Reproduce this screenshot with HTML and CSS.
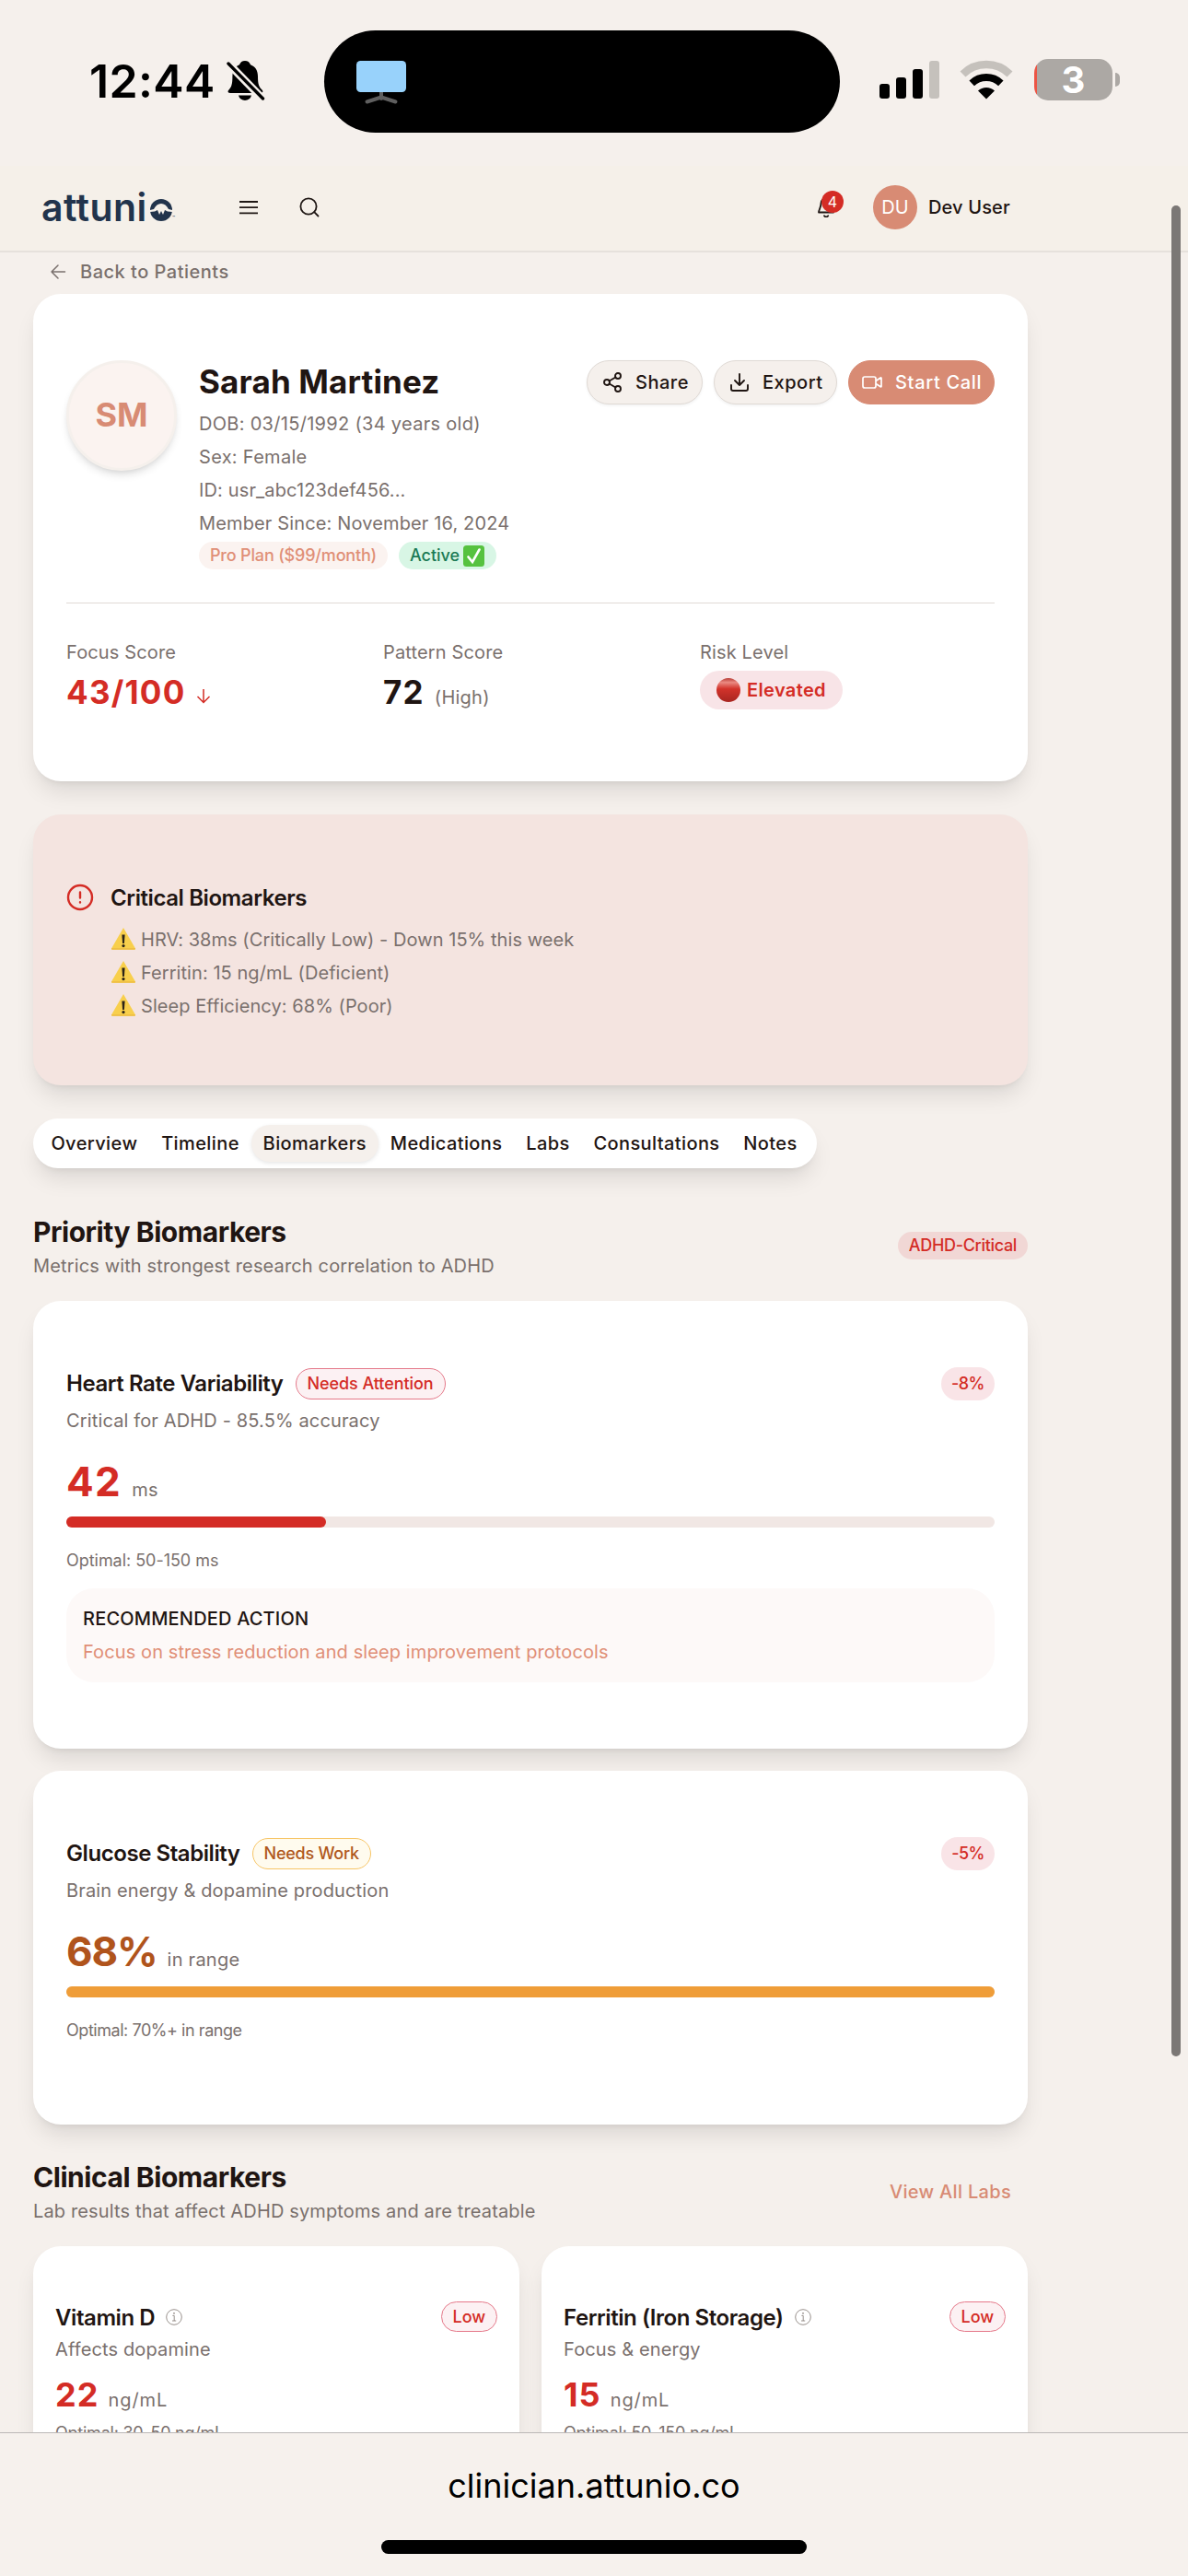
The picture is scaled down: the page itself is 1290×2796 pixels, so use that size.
FILE: index.html
```html
<!DOCTYPE html>
<html lang="en">
<head>
  <meta charset="UTF-8">
  <title>Attunio Clinician - Sarah Martinez</title>
  <meta name="viewport" content="width=device-width, initial-scale=1.0">
  <link rel="stylesheet" href="styles.css">
</head>
<body>
  <!-- shared icons -->
  <svg class="defs" width="0" height="0">
    <symbol id="warn" viewBox="0 0 28 25">
      <path d="M14 1 27 23.5a1 1 0 0 1-.8 1.2H1.8A1 1 0 0 1 1 23.5Z" fill="#f8cf4c"/>
      <path d="M1 23h26v.7a1 1 0 0 1-1 1H2a1 1 0 0 1-1-1Z" fill="#efbf45"/>
      <path d="M12.4 8.5h3.2l-.7 9.5h-1.8Z" fill="#2b2418"/>
      <circle cx="14" cy="20.6" r="1.6" fill="#2b2418"/>
    </symbol>
    <symbol id="info" viewBox="0 0 18 18">
      <circle cx="9" cy="9" r="8.3" fill="none" stroke="#8d8480" stroke-width="0.9"/>
      <path d="M7.4 7.4h1.8V13M7 13h4.2" fill="none" stroke="#8d8480" stroke-width="0.9"/>
      <circle cx="9" cy="4.8" r="0.9" fill="#8d8480"/>
    </symbol>
  </svg>

  <div class="status-bar">
    <div class="status-left">
      <span class="time">12:44</span>
      <svg width="42" height="46" viewBox="0 0 42 46">
        <path d="M20 1c3 0 5 1.600 6 4.200 5.500 2.200 8 6.500 8 12.800 0 8 1 11 4.500 14.500 1.600 1.800.8 3.500-1.500 3.500H4c-2.500 0-3.300-1.800-1.500-3.600C5.500 29.400 6.400 26 6.400 18c0-6.300 2.100-10.600 7.600-12.800C15 2.600 17 1 20 1Z"/>
        <path d="M13 38.600h14c-1 3.700-3.500 5.400-7 5.400s-6-1.700-7-5.400Z"/>
        <path d="M2 4 40 43" stroke="#f5f0eb" stroke-width="8.500"/>
        <path d="M2 4 39.500 42" stroke="#000" stroke-width="3.400" stroke-linecap="round"/>
      </svg>
    </div>
    <div class="island">
      <svg width="56" height="48" viewBox="0 0 56 48">
        <path d="M28 33v8M12.500 44.500 28 39.500 43.500 44.500" fill="none" stroke="#5f5f5f" stroke-width="4" stroke-linecap="round" stroke-linejoin="round"/>
        <rect x="1" y="0" width="54" height="34" rx="4.500" fill="#98d2fb"/>
      </svg>
    </div>
    <div class="status-right">
      <svg width="65" height="42" viewBox="0 0 65 42">
        <rect x="0" y="25" width="11" height="16" rx="3"/>
        <rect x="18" y="18" width="11" height="23" rx="3"/>
        <rect x="36" y="9" width="11" height="32" rx="3"/>
        <rect x="54" y="0" width="11" height="41" rx="3" fill="#c5c1bc"/>
      </svg>
      <svg class="wifi" width="58" height="43" viewBox="0 0 58 43">
        <path d="M3.500 15.500a36.500 36.500 0 0 1 51 0" fill="none" stroke="#c5c1bc" stroke-width="8.500"/>
        <path d="M13.200 25.400a23 23 0 0 1 31.600 0" fill="none" stroke="#000" stroke-width="8"/>
        <path d="M29 42.500 20 33.500a13 13 0 0 1 18 0Z"/>
      </svg>
      <div class="battery"><span>3</span></div>
      <div class="battery-nub"></div>
    </div>
  </div>

  <header>
    <div class="logo">
      <span>attuni</span>
      <svg width="24" height="24" viewBox="0 0 24 24">
        <circle cx="12" cy="12" r="12" fill="#22344c"/>
        <path d="M0 12 4 11Q7 5 12 5T20 11L24 12V14L19 13.500 16 12 14 17 12 13 10 17 8 12 5 13.500 0 14Z" fill="#f5f0e9"/>
      </svg>
      <small>™</small>
    </div>
    <svg class="menu-icon" width="20" height="16" viewBox="0 0 20 16" fill="none" stroke="#1f1714" stroke-width="1.800">
      <path d="M0 2h20M0 8.200h20M0 14.400h20"/>
    </svg>
    <svg class="search-icon" width="22" height="22" viewBox="0 0 22 22" fill="none" stroke="#1f1714" stroke-width="1.800" stroke-linecap="round">
      <circle cx="10" cy="10" r="8.600"/>
      <path d="m16.200 16.200 4.300 4.300"/>
    </svg>
    <div class="bell">
      <svg width="18" height="22" viewBox="0 0 18 22" fill="none" stroke="#1f1714" stroke-width="1.800" stroke-linecap="round" stroke-linejoin="round">
        <path d="M7 20.200a2.500 2.500 0 0 0 4.200 0"/>
        <path d="M9 1a5.500 5.500 0 0 0-5.500 5.500c0 5-2.500 7.500-2.500 10h16c0-2.500-2.500-5-2.500-10A5.500 5.500 0 0 0 9 1Z"/>
      </svg>
      <span class="count">4</span>
    </div>
    <div class="user-avatar">DU</div>
    <span class="user-name">Dev User</span>
  </header>

  <main>
    <div class="back">
      <svg width="24" height="24" viewBox="0 0 24 24" fill="none" stroke="#7a706d" stroke-width="1.500" stroke-linecap="round" stroke-linejoin="round">
        <path d="m12 19-7-7 7-7M19.500 12H5"/>
      </svg>
      <span>Back to Patients</span>
    </div>

    <section class="card patient">
      <div class="profile">
        <div class="avatar">SM</div>
        <div class="details">
          <h1>Sarah Martinez</h1>
          <p class="dob">DOB: 03/15/1992 (34 years old)</p>
          <p class="dob">Sex: Female</p>
          <p>ID: usr_abc123def456...</p>
          <p>Member Since: November 16, 2024</p>
          <div class="pills">
            <span class="pill plan">Pro Plan ($99/month)</span>
            <span class="pill active">Active
              <svg width="23" height="23" viewBox="0 0 23 23">
                <rect width="23" height="23" rx="3.500" fill="#56c23f"/>
                <path d="m5.500 12.500 4.500 5.500L17.500 4.500" fill="none" stroke="#fff" stroke-width="2.600" stroke-linecap="round"/>
              </svg>
            </span>
          </div>
        </div>
        <div class="actions">
          <button class="btn">
            <svg width="24" height="24" viewBox="0 0 24 24" fill="none" stroke="currentColor" stroke-width="1.900" stroke-linecap="round">
              <circle cx="18" cy="5" r="3"/><circle cx="6" cy="12" r="3"/><circle cx="18" cy="19" r="3"/>
              <path d="m8.600 13.500 6.800 4M15.400 6.500l-6.800 4"/>
            </svg>
            Share
          </button>
          <button class="btn export">
            <svg width="24" height="24" viewBox="0 0 24 24" fill="none" stroke="currentColor" stroke-width="1.900" stroke-linecap="round" stroke-linejoin="round">
              <path d="M21 15v4a2 2 0 0 1-2 2H5a2 2 0 0 1-2-2v-4M7 10l5 5 5-5M12 15V3"/>
            </svg>
            Export
          </button>
          <button class="btn primary">
            <svg width="24" height="24" viewBox="0 0 24 24" fill="none" stroke="currentColor" stroke-width="1.700" stroke-linejoin="round">
              <path d="m16 10.500 5.200-3.500a.5.500 0 0 1 .8.400v9a.5.500 0 0 1-.8.400L16 13.500"/>
              <rect x="2" y="6" width="14" height="12" rx="2"/>
            </svg>
            Start Call
          </button>
        </div>
      </div>
      <div class="scores">
        <div>
          <p>Focus Score</p>
          <div class="score-value red">43/100
            <svg width="16" height="17" viewBox="0 0 16 17" fill="none" stroke="currentColor" stroke-width="1.500">
              <path d="M8 1v14M1.500 9 8 15.500 14.500 9"/>
            </svg>
          </div>
        </div>
        <div>
          <p>Pattern Score</p>
          <div class="score-value">72 <small>(High)</small></div>
        </div>
        <div>
          <p>Risk Level</p>
          <span class="risk"><i class="risk-dot"></i>Elevated</span>
        </div>
      </div>
    </section>

    <section class="card critical">
      <svg width="30" height="30" viewBox="0 0 30 30" fill="none" stroke="#d42c25" stroke-width="2.400" stroke-linecap="round">
        <circle cx="15" cy="15" r="13"/>
        <path d="M15 9.500v6M15 20.300v.2"/>
      </svg>
      <div>
        <h2>Critical Biomarkers</h2>
        <p><svg width="28" height="25"><use href="#warn"/></svg>HRV: 38ms (Critically Low) - Down 15% this week</p>
        <p><svg width="28" height="25"><use href="#warn"/></svg>Ferritin: 15 ng/mL (Deficient)</p>
        <p><svg width="28" height="25"><use href="#warn"/></svg>Sleep Efficiency: 68% (Poor)</p>
      </div>
    </section>

    <nav class="tabs">
      <a>Overview</a>
      <a>Timeline</a>
      <a class="selected">Biomarkers</a>
      <a>Medications</a>
      <a>Labs</a>
      <a>Consultations</a>
      <a>Notes</a>
    </nav>

    <div class="section-head">
      <div>
        <h2>Priority Biomarkers</h2>
        <p>Metrics with strongest research correlation to ADHD</p>
      </div>
      <span class="pill adhd">ADHD-Critical</span>
    </div>

    <section class="card marker">
      <div class="marker-head">
        <h3>Heart Rate Variability</h3>
        <span class="badge bad">Needs Attention</span>
        <span class="change">-8%</span>
      </div>
      <p>Critical for ADHD - 85.5% accuracy</p>
      <div class="value red hrv">42 <small>ms</small></div>
      <div class="track"><div class="fill" style="width:28%"></div></div>
      <p class="optimal">Optimal: 50-150 ms</p>
      <div class="action">
        <strong>RECOMMENDED ACTION</strong>
        <p>Focus on stress reduction and sleep improvement protocols</p>
      </div>
    </section>

    <section class="card marker">
      <div class="marker-head">
        <h3>Glucose Stability</h3>
        <span class="badge warn">Needs Work</span>
        <span class="change">-5%</span>
      </div>
      <p>Brain energy &amp; dopamine production</p>
      <div class="value amber">68% <small>in range</small></div>
      <div class="track"><div class="fill orange" style="width:100%"></div></div>
      <p class="optimal glucose">Optimal: 70%+ in range</p>
    </section>

    <div class="section-head clinical">
      <div>
        <h2>Clinical Biomarkers</h2>
        <p>Lab results that affect ADHD symptoms and are treatable</p>
      </div>
      <a class="view-all">View All Labs</a>
    </div>

    <div class="labs">
      <section class="card lab">
        <div class="lab-head">
          <h3>Vitamin D</h3>
          <svg width="18" height="18"><use href="#info"/></svg>
          <span class="badge bad">Low</span>
        </div>
        <p>Affects dopamine</p>
        <div class="lab-value">22 <small>ng/mL</small></div>
        <p class="lab-optimal">Optimal: 30-50 ng/mL</p>
      </section>
      <section class="card lab">
        <div class="lab-head">
          <h3>Ferritin (Iron Storage)</h3>
          <svg width="18" height="18"><use href="#info"/></svg>
          <span class="badge bad">Low</span>
        </div>
        <p>Focus &amp; energy</p>
        <div class="lab-value">15 <small>ng/mL</small></div>
        <p class="lab-optimal">Optimal: 50-150 ng/mL</p>
      </section>
    </div>
  </main>

  <footer>
    <span>clinician.attunio.co</span>
    <div class="home-indicator"></div>
  </footer>

  <div class="scroll-thumb"></div>
</body>
</html>
```
FILE: styles.css
```css
* {
  box-sizing: border-box;
}
body {
  margin: 0;
  position: relative;
  width: 1290px;
  height: 2796px;
  overflow: hidden;
  display: flex;
  flex-direction: column;
  background: #f5f0ec;
  color: #1f1512;
  font-family: Inter, sans-serif;
  font-size: 20px;
  line-height: 36px;
}
h1, h2, h3, p { margin: 0; }
svg { flex: none; display: block; }
.defs { position: absolute; }
.red { color: #d42c25; }

/* phone status bar */
.status-bar {
  height: 180px;
  flex: none;
  padding-top: 33px;
  display: grid;
  grid-template-columns: 352px 560px 1fr;
  grid-template-rows: 111px;
  color: #000;
}
.status-left {
  display: flex;
  align-items: center;
  padding: 0 0 2px 97px;
  gap: 12px;
}
.time {
  font-size: 50px;
  font-weight: 600;
  letter-spacing: 0.007em;
}
.island {
  background: #000;
  border-radius: 56px;
  padding: 33px 34px;
}
.status-right {
  display: flex;
  align-items: center;
  padding: 0 0 4px 43px;
}
.wifi { margin-left: 22px; }
.battery {
  margin-left: 23px;
  width: 85px;
  height: 45px;
  border-radius: 15px;
  background: linear-gradient(90deg, #ec5545 3px, #aca8a4 3px);
  color: #fff;
  font-size: 40px;
  font-weight: 700;
  line-height: 45px;
  text-align: center;
}
.battery-nub {
  margin-left: 3px;
  width: 5px;
  height: 15px;
  border-radius: 0 5px 5px 0;
  background: #aca8a4;
}

/* app header */
header {
  flex: none;
  height: 94px;
  display: flex;
  align-items: center;
  padding: 0 0 2px 45px;
  background: #f5f0e9;
  border-bottom: 2px solid #e6e1dc;
}
.logo {
  display: flex;
  align-items: center;
  width: 145px;
  color: #22344c;
}
.logo span {
  width: 118px;
  font-size: 41px;
  font-weight: 600;
  letter-spacing: 0.01em;
}
.logo svg { margin-top: 5px; }
.logo small {
  font-size: 5px;
  line-height: 5px;
  margin-top: 22px;
}
.menu-icon { margin-left: 70px; }
.search-icon { margin-left: 45px; }
.bell {
  position: relative;
  margin-left: 541px;
  width: 18px;
}
.bell .count {
  position: absolute;
  left: 4px;
  top: -7px;
  width: 24px;
  height: 24px;
  border-radius: 50%;
  background: #d42c25;
  color: #fff;
  font-size: 16px;
  line-height: 24px;
  text-align: center;
}
.user-avatar {
  margin-left: 42px;
  width: 48px;
  height: 48px;
  border-radius: 50%;
  background: #d88b74;
  color: #fff;
  line-height: 48px;
  text-align: center;
}
.user-name {
  margin-left: 12px;
  font-weight: 500;
  letter-spacing: 0.007em;
}

/* page */
main {
  flex: 1;
  min-height: 0;
  overflow: hidden;
  padding: 0 174px 0 36px;
  letter-spacing: 0.007em;
}
main p { color: #7a706d; }
.back {
  display: flex;
  align-items: center;
  gap: 12px;
  height: 41px;
  margin-bottom: 4px;
  padding-left: 15px;
  color: #7a706d;
  font-weight: 500;
  letter-spacing: 0.025em;
}
.card {
  background: #fff;
  border-radius: 30px;
  box-shadow: 0 15px 23px -4px rgba(0,0,0,0.1), 0 6px 9px -6px rgba(0,0,0,0.1);
}

/* patient card */
.patient {
  height: 529px;
  padding: 72px 36px;
}
.profile {
  display: flex;
  height: 264px;
  border-bottom: 1.5px solid #e0dad6;
}
.avatar {
  width: 120px;
  height: 120px;
  border-radius: 50%;
  border: 3px solid #f5f0ec;
  background: #fbf3f0;
  box-shadow: 0 6px 9px -1px rgba(0,0,0,0.1), 0 3px 6px -3px rgba(0,0,0,0.1);
  color: #d88b74;
  font-size: 36px;
  font-weight: 700;
  line-height: 112px;
  letter-spacing: 0;
  text-align: center;
}
.details {
  flex: 1;
  padding-left: 24px;
}
.details h1 {
  font-size: 35px;
  line-height: 47px;
  margin-bottom: 4px;
  letter-spacing: 0.004em;
}
.details .dob { letter-spacing: 0.015em; }
.pills {
  display: flex;
  gap: 12px;
  margin-top: 2px;
}
.pill {
  display: flex;
  align-items: center;
  height: 30px;
  border-radius: 15px;
  padding: 0 12px;
  font-size: 18px;
  font-weight: 500;
  letter-spacing: -0.003em;
  white-space: nowrap;
}
.pill.plan {
  width: 205px;
  background: #fbf3f0;
  color: #e08f77;
  letter-spacing: -0.01em;
}
.pill.active {
  width: 106px;
  background: #d8f6e5;
  color: #1b7a55;
  gap: 4px;
}
.actions {
  display: flex;
  gap: 12px;
}
.btn {
  display: flex;
  align-items: center;
  gap: 13px;
  width: 126px;
  height: 48px;
  padding: 0 0 0 15px;
  border: 1.5px solid #e0dad5;
  border-radius: 24px;
  background: #f5f0ec;
  box-shadow: 0 1.5px 3px rgba(0,0,0,0.06);
  color: #1f1512;
  font-family: inherit;
  font-size: 20px;
  font-weight: 500;
  letter-spacing: 0.025em;
}
.btn.export { width: 134px; }
.btn.primary {
  width: 159px;
  padding-left: 13px;
  background: #d88b74;
  border-color: #d88b74;
  box-shadow: none;
  color: #fff;
  letter-spacing: 0.034em;
}
.scores {
  display: grid;
  grid-template-columns: repeat(3, 1fr);
  gap: 24px;
  padding-top: 35px;
}
.score-value {
  display: flex;
  align-items: baseline;
  gap: 11px;
  height: 48px;
  font-size: 35px;
  font-weight: 700;
  line-height: 48px;
  margin-top: 1px;
  letter-spacing: 0.035em;
}
.score-value small, .value small, .lab-value small {
  color: #7a706d;
  font-size: 20px;
  font-weight: 400;
  line-height: 1;
  letter-spacing: 0.012em;
}
.risk {
  display: inline-flex;
  align-items: center;
  gap: 7px;
  height: 42px;
  margin-top: 2px;
  padding: 0 18px;
  border-radius: 21px;
  background: #f8e4e7;
  color: #d42c25;
  font-weight: 600;
  letter-spacing: 0.018em;
}
.risk-dot {
  width: 26px;
  height: 26px;
  border-radius: 50%;
  background: linear-gradient(#b83a33 0%, #ea8a82 18%, #d2332b 45%, #a82520 100%);
}

/* critical alert */
.critical {
  display: flex;
  gap: 18px;
  height: 294px;
  margin-top: 36px;
  padding: 72px 36px 0;
  background: #f4e4e0;
}
.critical > svg { margin-top: 3px; }
.critical h2 {
  font-size: 24px;
  font-weight: 600;
  line-height: 37px;
  letter-spacing: -0.017em;
  margin-bottom: 9px;
}
.critical p {
  display: flex;
  align-items: center;
  gap: 5px;
  letter-spacing: 0.003em;
}
.critical p svg { margin-bottom: 3px; }

.tabs {
  display: flex;
  width: 851px;
  height: 54px;
  margin-top: 36px;
  padding: 7px 6.5px;
  border-radius: 27px;
  background: #fff;
  box-shadow: 0 15px 23px -4px rgba(0,0,0,0.1), 0 6px 9px -6px rgba(0,0,0,0.1);
  font-weight: 500;
  letter-spacing: 0.02em;
}
.tabs a {
  padding: 0 12.9px;
  line-height: 40px;
  border-radius: 20px;
}
.tabs .selected {
  background: #f5f0ec;
  box-shadow: 0 1.5px 4px rgba(0,0,0,0.1);
}

.section-head {
  display: flex;
  align-items: center;
  justify-content: space-between;
  margin: 50px 0 20px;
}
.section-head.clinical { margin-top: 38px; }
.section-head h2 {
  font-size: 30px;
  line-height: 38px;
  letter-spacing: -0.015em;
}
.pill.adhd {
  margin-bottom: 6px;
  background: #f1d7d5;
  color: #d42c25;
  letter-spacing: -0.018em;
}
.view-all {
  margin-bottom: 5px;
  padding-right: 18px;
  color: #d88b74;
  font-weight: 500;
  letter-spacing: 0.016em;
}

/* biomarker cards */
.marker {
  padding: 72px 36px;
  margin-bottom: 24px;
}
.marker-head, .lab-head {
  display: flex;
  align-items: center;
  gap: 13px;
  height: 36px;
  margin-bottom: 4px;
}
h3 {
  font-size: 24px;
  font-weight: 600;
  letter-spacing: -0.018em;
  white-space: nowrap;
}
.badge {
  height: 34px;
  padding: 0 12px;
  border: 1.5px solid;
  border-radius: 17px;
  font-size: 18px;
  font-weight: 500;
  line-height: 31px;
  letter-spacing: -0.004em;
  white-space: nowrap;
}
.badge.bad { background: #fcf1f3; border-color: #e5798a; color: #d42c25; }
.badge.warn { background: #fffbee; border-color: #f7c566; color: #b0581c; letter-spacing: -0.014em; }
.change {
  margin-left: auto;
  width: 58px;
  border-radius: 18px;
  background: #f9e4e7;
  color: #d42c25;
  font-size: 18px;
  font-weight: 500;
  letter-spacing: -0.03em;
  text-align: center;
}
.value {
  display: flex;
  align-items: baseline;
  gap: 11px;
  height: 60px;
  margin-top: 18px;
  margin-bottom: 8px;
  font-size: 44px;
  font-weight: 700;
  line-height: 60px;
  letter-spacing: -0.025em;
}
.value.hrv { letter-spacing: 0.03em; gap: 11px; }
.amber { color: #b0541c; }
.track {
  height: 12px;
  border-radius: 6px;
  background: #f1e7e4;
}
.fill {
  height: 12px;
  border-radius: 6px;
  background: #d42c25;
}
.fill.orange { background: #ef9d38; }
.marker .optimal {
  margin: 22px 0 16px;
  font-size: 18px;
  line-height: 28px;
  letter-spacing: -0.002em;
}
.marker .optimal.glucose { letter-spacing: -0.025em; }
.action {
  padding: 15px 18px;
  border-radius: 30px;
  background: #fdf9f8;
}
.action strong {
  display: block;
  font-weight: 500;
  letter-spacing: 0.009em;
}
.action p { color: #e08f77; letter-spacing: 0.005em; }

/* lab cards */
.labs {
  display: grid;
  grid-template-columns: 1fr 1fr;
  gap: 24px;
}
.lab {
  padding: 61px 24px;
}
.lab-head {
  gap: 12px;
  height: 34px;
  margin-bottom: 0;
}
.lab-head .badge { margin: 0 0 3px auto; height: 33px; }
.lab-head svg { margin-bottom: 3px; }
.lab p { line-height: 34px; }
.lab-value {
  display: flex;
  align-items: baseline;
  gap: 10px;
  height: 48px;
  margin-top: 8px;
  color: #d42c25;
  font-size: 36px;
  font-weight: 700;
  line-height: 48px;
  letter-spacing: 0.03em;
}
.lab-value small { letter-spacing: 0.045em; }
.lab .lab-optimal {
  margin-top: 4px;
  font-size: 18px;
  line-height: 28px;
  letter-spacing: -0.013em;
}

/* browser bottom bar */
footer {
  flex: none;
  height: 156px;
  display: flex;
  flex-direction: column;
  align-items: center;
  padding-top: 34px;
  border-top: 1px solid #bbb8b6;
  background: #f6f1ed;
  color: #000;
  font-size: 36px;
  line-height: 46px;
}
.home-indicator {
  width: 462px;
  height: 15px;
  margin-top: 36px;
  border-radius: 8px;
  background: #000;
}
.scroll-thumb {
  position: absolute;
  left: 1272px;
  top: 223px;
  width: 10px;
  height: 2009px;
  border-radius: 5px;
  background: #7b7775;
}
```
